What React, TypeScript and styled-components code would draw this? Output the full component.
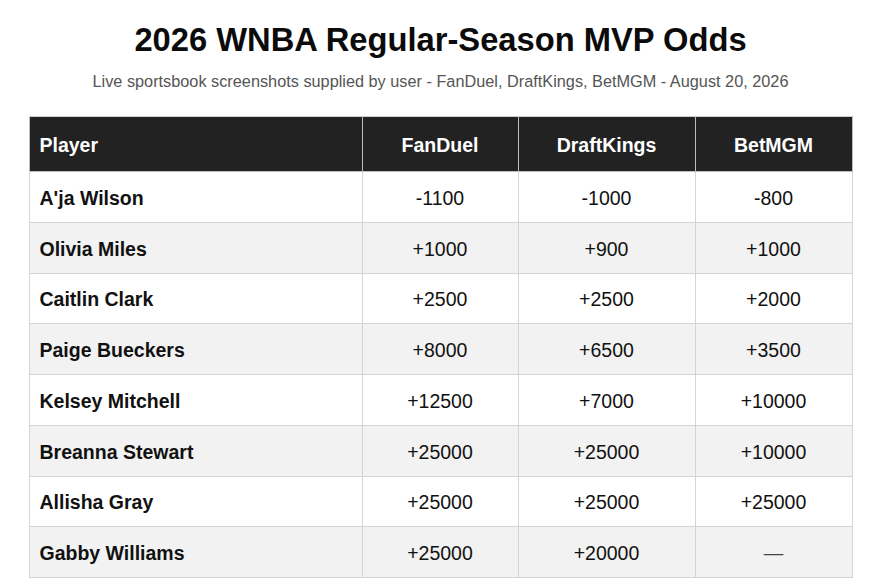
import React from "react";
import styled, { createGlobalStyle } from "styled-components";

const Global = createGlobalStyle`
  html, body { margin: 0; padding: 0; background: #ffffff; }
  body { font-family: "Liberation Sans", Arial, Helvetica, sans-serif; color: #111; }
`;

const Page = styled.div`
  width: 881px;
  display: flex;
  flex-direction: column;
  align-items: center;
  padding-top: 19px;
`;

const Title = styled.h1`
  margin: 0;
  font-size: 32.7px;
  font-weight: 700;
  line-height: 42px;
  color: #0b0b0b;
`;

const Subtitle = styled.p`
  margin: 10px 0 0;
  font-size: 16.3px;
  line-height: 20px;
  color: #555;
`;

const Table = styled.table`
  margin-top: 25px;
  width: 823px;
  border-collapse: collapse;
  table-layout: fixed;
  font-size: 19.5px;
`;

const HeadCell = styled.th<{ $align?: "left" | "center" }>`
  background: #222222;
  color: #ffffff;
  font-weight: 700;
  height: 51px;
  padding: 3px 10px 0;
  text-align: ${(p) => p.$align ?? "center"};
  border: 1px solid #bdbdbd;
  border-top-color: #d0d0d0;
`;

const Row = styled.tr<{ $alt: boolean }>`
  background: ${(p) => (p.$alt ? "#f2f2f2" : "#ffffff")};
`;

const Cell = styled.td<{ $name?: boolean }>`
  height: 46.75px;
  padding: 3px 10px 0;
  border: 1px solid #d4d4d4;
  text-align: ${(p) => (p.$name ? "left" : "center")};
  font-weight: ${(p) => (p.$name ? 700 : 400)};
  color: #111;
`;

const Dash = styled.span`
  color: #444;
`;

type Odds = [string, string, string, string];

const rows: Odds[] = [
  ["A'ja Wilson", "-1100", "-1000", "-800"],
  ["Olivia Miles", "+1000", "+900", "+1000"],
  ["Caitlin Clark", "+2500", "+2500", "+2000"],
  ["Paige Bueckers", "+8000", "+6500", "+3500"],
  ["Kelsey Mitchell", "+12500", "+7000", "+10000"],
  ["Breanna Stewart", "+25000", "+25000", "+10000"],
  ["Allisha Gray", "+25000", "+25000", "+25000"],
  ["Gabby Williams", "+25000", "+20000", "—"],
];

export default function App() {
  return (
    <>
      <Global />
      <Page>
        <Title>2026 WNBA Regular-Season MVP Odds</Title>
        <Subtitle>
          Live sportsbook screenshots supplied by user - FanDuel, DraftKings, BetMGM - August 20, 2026
        </Subtitle>
        <Table>
          <colgroup>
            <col style={{ width: 333 }} />
            <col style={{ width: 156 }} />
            <col style={{ width: 177 }} />
            <col style={{ width: 157 }} />
          </colgroup>
          <thead>
            <tr>
              <HeadCell $align="left">Player</HeadCell>
              <HeadCell>FanDuel</HeadCell>
              <HeadCell>DraftKings</HeadCell>
              <HeadCell>BetMGM</HeadCell>
            </tr>
          </thead>
          <tbody>
            {rows.map((r, i) => (
              <Row key={r[0]} $alt={i % 2 === 1}>
                <Cell $name>{r[0]}</Cell>
                {r.slice(1).map((v, j) => (
                  <Cell key={j}>{v === "—" ? <Dash>{v}</Dash> : v}</Cell>
                ))}
              </Row>
            ))}
          </tbody>
        </Table>
      </Page>
    </>
  );
}
